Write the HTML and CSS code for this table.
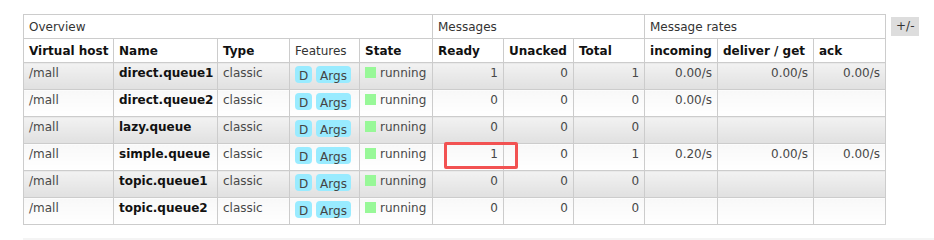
FILE: index.html
```html
<!DOCTYPE html>
<html>
<head>
<meta charset="utf-8">
<link rel="stylesheet" href="styles.css">
</head>
<body>
<div class="section">
  <div class="list-wrap">
    <table class="list">
      <colgroup>
        <col class="c-vhost"><col class="c-name"><col class="c-type"><col class="c-feat"><col class="c-state">
        <col class="c-ready"><col class="c-unacked"><col class="c-total">
        <col class="c-in"><col class="c-deliver"><col class="c-ack">
      </colgroup>
      <thead>
        <tr class="group">
          <th colspan="5">Overview</th>
          <th colspan="3">Messages</th>
          <th colspan="3">Message rates</th>
        </tr>
        <tr class="cols">
          <th>Virtual host</th><th>Name</th><th>Type</th><th class="normal">Features</th><th>State</th>
          <th>Ready</th><th>Unacked</th><th>Total</th>
          <th>incoming</th><th>deliver / get</th><th>ack</th>
        </tr>
      </thead>
      <tbody>
        <tr class="alt1">
          <td>/mall</td><td class="qname">direct.queue1</td><td>classic</td>
          <td><span class="tag">D</span> <span class="tag">Args</span></td>
          <td><span class="status"></span>running</td>
          <td class="num">1</td><td class="num">0</td><td class="num">1</td>
          <td class="num">0.00/s</td><td class="num">0.00/s</td><td class="num">0.00/s</td>
        </tr>
        <tr class="alt2">
          <td>/mall</td><td class="qname">direct.queue2</td><td>classic</td>
          <td><span class="tag">D</span> <span class="tag">Args</span></td>
          <td><span class="status"></span>running</td>
          <td class="num">0</td><td class="num">0</td><td class="num">0</td>
          <td class="num">0.00/s</td><td class="num"></td><td class="num"></td>
        </tr>
        <tr class="alt1">
          <td>/mall</td><td class="qname">lazy.queue</td><td>classic</td>
          <td><span class="tag">D</span> <span class="tag">Args</span></td>
          <td><span class="status"></span>running</td>
          <td class="num">0</td><td class="num">0</td><td class="num">0</td>
          <td class="num"></td><td class="num"></td><td class="num"></td>
        </tr>
        <tr class="alt2">
          <td>/mall</td><td class="qname">simple.queue</td><td>classic</td>
          <td><span class="tag">D</span> <span class="tag">Args</span></td>
          <td><span class="status"></span>running</td>
          <td class="num">1</td><td class="num">0</td><td class="num">1</td>
          <td class="num">0.20/s</td><td class="num">0.00/s</td><td class="num">0.00/s</td>
        </tr>
        <tr class="alt1">
          <td>/mall</td><td class="qname">topic.queue1</td><td>classic</td>
          <td><span class="tag">D</span> <span class="tag">Args</span></td>
          <td><span class="status"></span>running</td>
          <td class="num">0</td><td class="num">0</td><td class="num">0</td>
          <td class="num"></td><td class="num"></td><td class="num"></td>
        </tr>
        <tr class="alt2">
          <td>/mall</td><td class="qname">topic.queue2</td><td>classic</td>
          <td><span class="tag">D</span> <span class="tag">Args</span></td>
          <td><span class="status"></span>running</td>
          <td class="num">0</td><td class="num">0</td><td class="num">0</td>
          <td class="num"></td><td class="num"></td><td class="num"></td>
        </tr>
      </tbody>
    </table>
    <span class="plus-minus">+/-</span>
    <div class="highlight"></div>
  </div>
  <div class="next-bar"></div>
</div>
</body>
</html>
```

FILE: styles.css
```css
html, body {
  margin: 0;
  padding: 0;
  background: #fff;
}
body {
  font-family: "DejaVu Sans", Verdana, sans-serif;
  font-size: 12px;
  color: #484848;
}
.section {
  padding: 14px 0 0 23px;
}
.list-wrap {
  position: relative;
  display: flex;
  align-items: flex-start;
}
table.list {
  border-collapse: collapse;
  table-layout: fixed;
  width: 862px;
}
.c-vhost { width: 90px; }
.c-name { width: 104px; }
.c-type { width: 72px; }
.c-feat { width: 70px; }
.c-state { width: 73px; }
.c-ready { width: 71px; }
.c-unacked { width: 70px; }
.c-total { width: 71px; }
.c-in { width: 73px; }
.c-deliver { width: 96px; }
.c-ack { width: 72px; }

table.list th,
table.list td {
  border: 1px solid #ccc;
  padding: 0 5px;
  text-align: left;
  vertical-align: top;
  white-space: nowrap;
  overflow: hidden;
  line-height: 15px;
}
table.list thead th {
  background: #fff;
  height: 24px;
  box-sizing: border-box;
  padding-top: 5px;
}
table.list tr.group th {
  font-weight: normal;
  color: #333;
}
table.list tr.cols th {
  font-weight: bold;
  color: #111;
}
table.list tr.cols th.normal {
  font-weight: normal;
  color: #333;
}
table.list tbody td {
  height: 27px;
  box-sizing: border-box;
  padding-top: 3px;
}
table.list tr.alt1 td {
  background: linear-gradient(to bottom, #f2f2f2 0%, #e0e0e0 100%);
}
table.list tr.alt2 td {
  background: linear-gradient(to bottom, #f8f8f8 0%, #ffffff 100%);
}
table.list td.qname {
  font-weight: bold;
  color: #111;
}
table.list td.num {
  text-align: right;
}
.tag {
  display: inline-block;
  background: #99ebff;
  color: #444;
  border-radius: 4px;
  padding: 3px 4px 0;
  line-height: 14px;
  height: 17px;
  box-sizing: border-box;
  vertical-align: -2px;
}
.status {
  display: inline-block;
  width: 11px;
  height: 11px;
  background: #98f898;
  margin-right: 4px;
  vertical-align: -1px;
}
.plus-minus {
  margin: 3px 0 0 5px;
  background: #ddd;
  color: #333;
  padding: 2px 5px;
  line-height: 15px;
}
.highlight {
  position: absolute;
  left: 421px;
  top: 128px;
  width: 68px;
  height: 21px;
  border: 3px solid #f25252;
  border-radius: 2px;
}
.next-bar {
  margin-top: 13px;
  height: 6px;
  background: #f4f4f4;
}
```
